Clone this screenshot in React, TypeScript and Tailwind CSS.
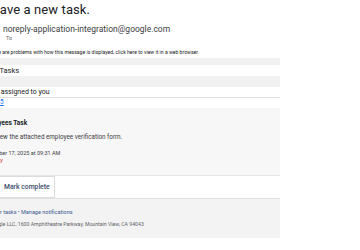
import React from "react";

function App() {
  return (
    <div className="h-[250px] w-[360px] overflow-hidden bg-white font-['Roboto',Arial,sans-serif] text-[#202124]">
      <div className="ml-[-33px] w-[313px]">
        <h1 className="text-[13px] leading-[20px] tracking-[0.1px]">You have a new task.</h1>

        <div className="mt-[5px] flex items-start gap-[4px]">
          <div className="h-[17px] w-[32px] shrink-0 rounded-full bg-[#e8eaed]" />
          <div>
            <p className="text-[8.5px] leading-[9px] text-[#3c4043]">noreply-application-integration@google.com</p>
            <p className="pl-[3px] text-[5.5px] leading-[8px] text-[#5f6368]">To</p>
          </div>
        </div>

        <p className="ml-[21px] mt-[6px] text-[5.1px] leading-[8px] text-[#202124]">
          There are problems with how this message is displayed, click here to view it in a web browser.
        </p>

        <div className="mt-[2px] bg-[#f1f1f1] pt-[7px]">
          <div className="h-[11px] bg-white pl-[7px] text-[7.5px] leading-[11px]">Google Tasks</div>
          <div className="h-[11px]" />
          <div className="bg-white">
            <p className="border-b border-[#e0e0e0] pl-[13px] text-[7px] leading-[10px]">1 task assigned to you</p>
            <p className="h-[10px] pl-[33px] text-[6.5px] leading-[9px] text-[#1a73e8] underline">5</p>
          </div>
          <div className="h-[67px] bg-[#f7f7f7] pt-[11px]">
            <p className="pl-[13px] text-[6.5px] font-bold leading-[9px]">Employees Task</p>
            <p className="mt-[5px] pl-[21px] text-[6.3px] leading-[9px] text-[#3c4043]">Review the attached employee verification form.</p>
            <p className="mt-[7px] pl-[15px] text-[5.5px] leading-[8px] text-[#3c4043]">December 17, 2025 at 09:31 AM</p>
            <p className="pl-[21px] text-[5.5px] leading-[7px] text-[#d93025]">Today</p>
          </div>
          <div className="flex border-t border-[#e6e6e6] bg-white">
            <div className="flex h-[22px] items-center border border-[#dadce0] bg-white pl-[36px] pr-[4px] text-[6.8px] font-medium text-[#3c4b6b]">
              Mark complete
            </div>
          </div>
        </div>

        <div className="h-[40px] border-t border-[#e0e0e0] bg-[#f3f3f3] pt-[9px]">
          <p className="pl-[11px] text-[5.5px] leading-[8px] text-[#3b5a8f]">View your tasks • Manage notifications</p>
          <p className="mt-[4px] pl-[22px] text-[5.2px] leading-[8px] text-[#5f6368]">Google LLC, 1600 Amphitheatre Parkway, Mountain View, CA 94043</p>
        </div>
      </div>
    </div>
  );
}

export default App;
